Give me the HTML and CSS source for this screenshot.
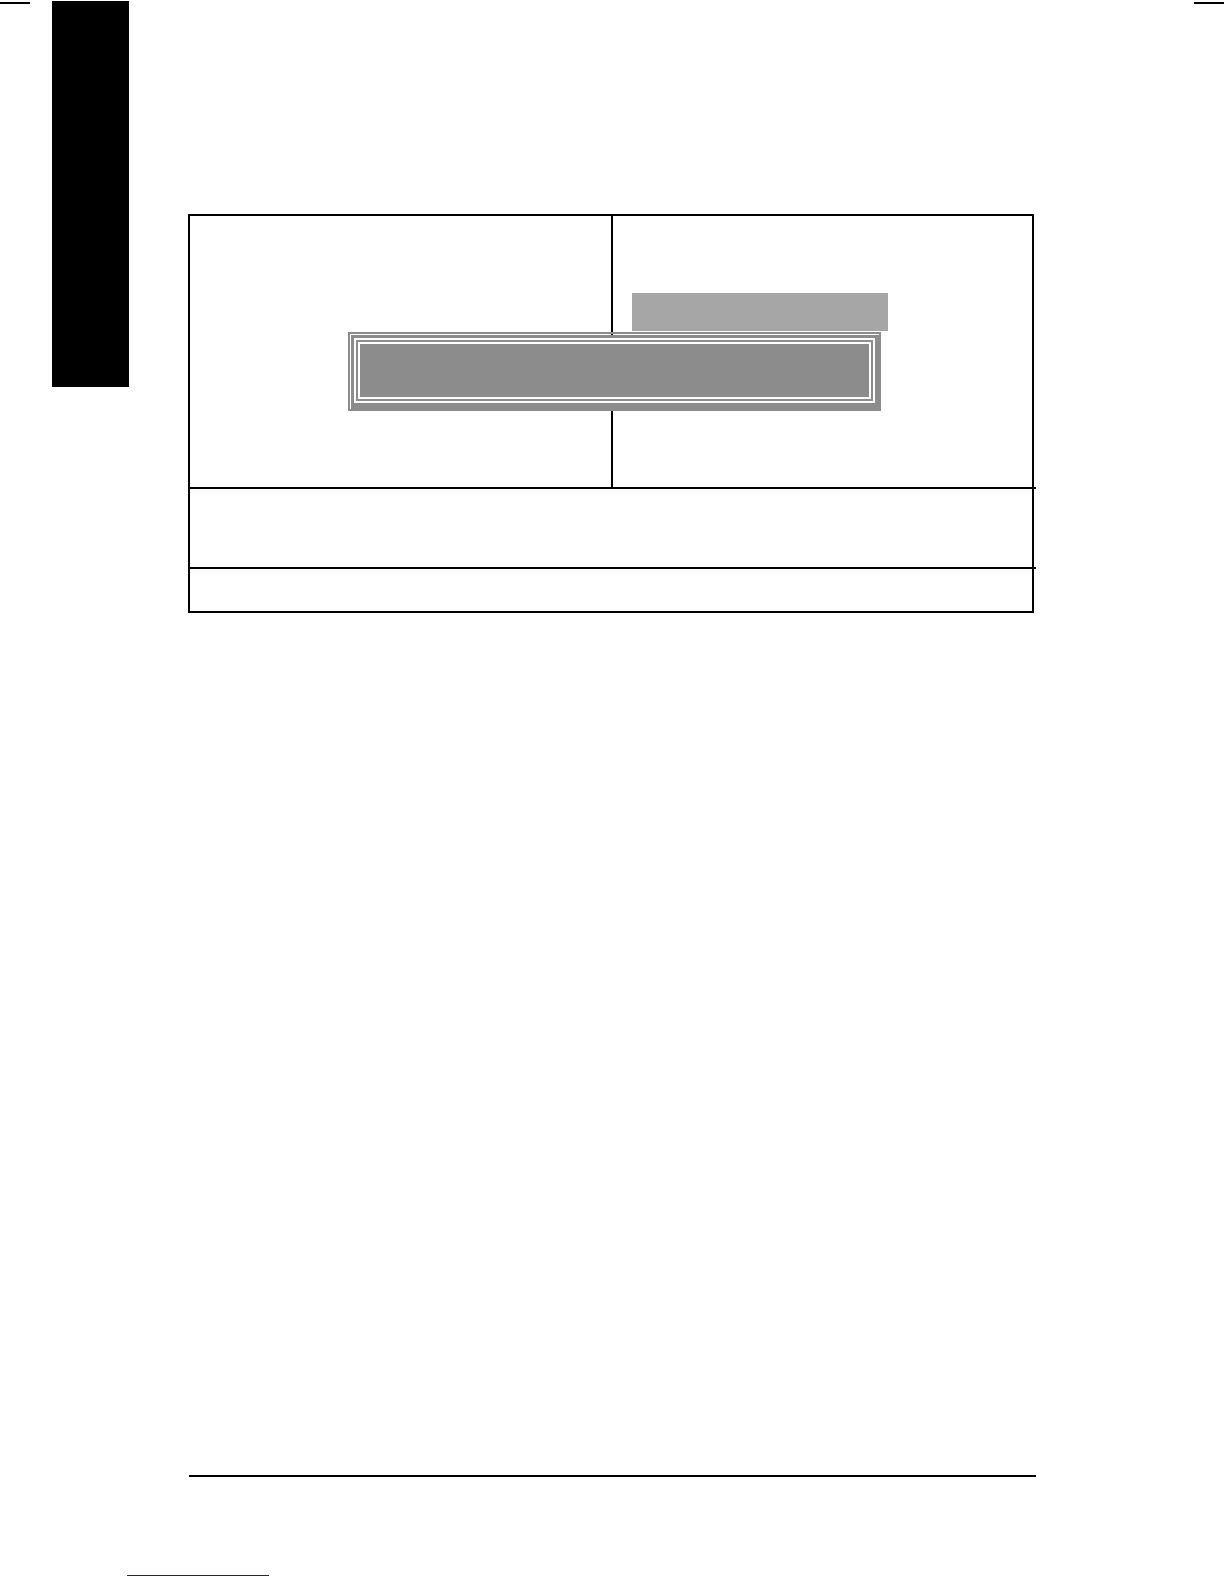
FILE: index.html
```
<!DOCTYPE html>
<html lang="en">
<head>
  <meta charset="UTF-8" />
  <meta name="viewport" content="width=device-width, initial-scale=1.0"/>
  <link rel="stylesheet" href="styles.css">
</head>
<body>

  <div class="page">
    <div class="side side-left">
      <div class="crop-mark"></div>
      <div class="side-tab"></div>
    </div>

    <main class="content">
      <div class="frame">
        <div class="row row-split">
          <div class="cell"></div>
          <div class="cell cell-right">
            <div class="tag"></div>
          </div>

          <!-- bevelled plate lying over the column divider -->
          <div class="plate">
            <div class="plate-edge">
              <div class="plate-ring">
                <div class="plate-face"></div>
              </div>
            </div>
          </div>
        </div>
        <div class="row row-middle"></div>
        <div class="row row-bottom"></div>
      </div>
    </main>

    <div class="side side-right">
      <div class="crop-mark"></div>
    </div>
  </div>

  <footer class="footer">
    <hr class="footer-rule">
    <a class="footer-link" href="#" aria-label="Link"></a>
  </footer>

</body>
</html>
```
FILE: styles.css
```
* {
  box-sizing: border-box;
}

body {
  margin: 0;
  min-height: 100vh;
  display: flex;
  flex-direction: column;
  background: #fff;
  font-family: "Liberation Sans", sans-serif;
}

.page {
  flex: 1;
  display: grid;
  grid-template-columns: 188px 1fr 188px;
}

.side {
  display: flex;
  align-items: flex-start;
}

.side-left {
  gap: 22px;
}

.side-right {
  justify-content: flex-end;
}

.crop-mark {
  width: 30px;
  height: 2px;
  margin-top: 2px;
  background: #000;
}

.side-tab {
  width: 77px;
  height: 386px;
  margin-top: 1px;
  background: #000;
}

.content {
  padding: 214px 2px 40px 0;
}

.frame {
  border: 2px solid #000;
}

/* row rules run slightly past the right side of the frame */
.row-middle,
.row-bottom {
  margin-right: -4px;
  border-top: 2px solid #000;
}

.row-split {
  position: relative;
  display: grid;
  grid-template-columns: 1fr 1fr;
  min-height: 271px;
}

.row-middle {
  min-height: 80px;
}

.row-bottom {
  min-height: 44px;
}

.cell-right {
  border-left: 2px solid #000;
  padding: 77px 19px 0;
}

.tag {
  max-width: 256px;
  height: 38px;
  background: #a6a6a6;
}

.plate {
  position: absolute;
  top: 116px;
  left: 158px;
  right: 151px;
  padding: 2px;
  background: #8c8c8c;
}

.plate-edge {
  position: relative;
  border-top: 1px solid #fff;
  border-left: 1px solid #fff;
  padding: 3px 4px 6px 3px;
}

.plate-edge::before {
  content: "";
  position: absolute;
  top: -1px;
  left: 260px;
  width: 2px;
  height: 1px;
  background: #000;
}

.plate-ring {
  border: 2px solid #fff;
  padding: 2px;
}

.plate-face {
  height: 57px;
  border: 2px solid #fff;
}

.footer {
  padding-bottom: 8px;
}

.footer-rule {
  height: 2px;
  margin: 0 188px 98px 189px;
  border: none;
  background: #000;
}

.footer-link {
  display: block;
  width: 142px;
  margin-left: 127px;
  border-bottom: 1px solid #1a1a99;
}
```
